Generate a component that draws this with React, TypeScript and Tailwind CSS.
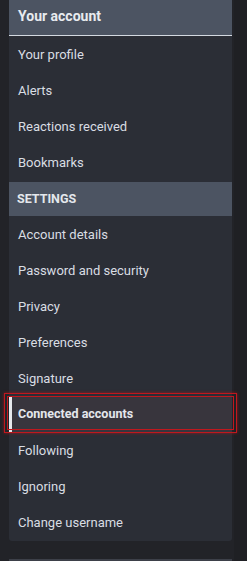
const ACCOUNT_LINKS = ["Your profile", "Alerts", "Reactions received", "Bookmarks"];

const SETTINGS_LINKS = [
  "Account details",
  "Password and security",
  "Privacy",
  "Preferences",
  "Signature",
  "Connected accounts",
  "Following",
  "Ignoring",
  "Change username",
];

const ACTIVE = "Connected accounts";

function NavRow({ label }: { label: string }) {
  const active = label === ACTIVE;
  return (
    <div
      className={`relative flex h-9 items-center px-[9px] pt-[1px] ${
        active ? "bg-[#38353d] text-[12.5px] font-bold text-[#e4e7ec]" : "text-[13px] text-[#d9dde3]"
      }`}
    >
      {active && (
        <>
          <span className="absolute left-0 top-[1px] bottom-[-1px] w-[3px] bg-[#e6e8ec]" />
          <span className="pointer-events-none absolute -left-[5px] -right-[5px] -top-[3px] -bottom-[1px] z-10 border-[4px] border-double border-[#c0181e] shadow-[0_0_3px_rgba(190,20,25,0.7)]" />
        </>
      )}
      <span className="relative">{label}</span>
    </div>
  );
}

export default function App() {
  return (
    <div
      className="flex h-[561px] w-[247px] overflow-hidden bg-[#222328]"
      style={{ fontFamily: "Roboto, 'Liberation Sans', sans-serif" }}
    >
      <div className="ml-[9px] flex w-[223px] flex-col">
        <nav className="h-[541px] rounded-b-[3px] bg-[#2b2e36]">
          <div className="flex h-9 items-center border-b border-[#d3d9e0] bg-[#4c5462] px-[9px] pb-[2px] text-[14px] font-bold text-[#e8ebef]">
            Your account
          </div>
          {ACCOUNT_LINKS.map((label) => (
            <NavRow key={label} label={label} />
          ))}
          <div className="mt-[2px] flex h-[34px] items-center bg-[#4c5462] px-[8px] text-[12.5px] font-bold uppercase text-[#e4e8ec]">
            Settings
          </div>
          {SETTINGS_LINKS.map((label) => (
            <NavRow key={label} label={label} />
          ))}
        </nav>
        <div className="mt-[18px] h-[2px] bg-[#3d4049]" />
      </div>
      <div className="ml-[2px] h-full w-[13px] bg-[#1f2024]" />
    </div>
  );
}
